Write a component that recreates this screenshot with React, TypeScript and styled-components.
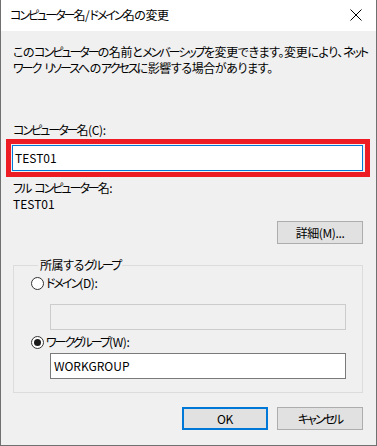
import styled, { createGlobalStyle } from "styled-components";

const GlobalStyle = createGlobalStyle`
  html, body {
    margin: 0;
    padding: 0;
    background: #f0f0f0;
  }
  * {
    box-sizing: border-box;
  }
`;

const FONT = `"Noto Sans CJK JP", "Noto Sans", sans-serif`;

// katakana runs are set tighter, as the Windows UI font draws them narrow
const Kana = styled.span`
  letter-spacing: -2px;
`;

const Space = styled.span`
  display: inline-block;
  width: 4px;
`;

const RUN = /([\u30A0-\u30FF]+| )/;

function JText({ children }: { children: string }) {
  return (
    <>
      {children.split(RUN).map((part, i) => {
        if (part === " ") return <Space key={i} />;
        if (/^[\u30A0-\u30FF]+$/.test(part)) return <Kana key={i}>{part}</Kana>;
        return part;
      })}
    </>
  );
}

const Window = styled.div`
  width: 377px;
  height: 446px;
  display: flex;
  flex-direction: column;
  overflow: hidden;
  background: #f0f0f0;
  border: 1px solid #707070;
  border-top: none;
  font-family: ${FONT};
  font-feature-settings: "palt" 1;
  font-size: 12px;
  line-height: 16px;
  letter-spacing: -0.4px;
  color: #000;
`;

const TitleBar = styled.div`
  height: 31px;
  flex-shrink: 0;
  display: flex;
  align-items: center;
  justify-content: space-between;
  background: #fff;
  padding: 0 9px 0 9px;
`;

const Title = styled.span`
  font-size: 12px;
  padding-bottom: 1px;
`;

const CloseIcon = styled.svg`
  width: 12px;
  height: 12px;
  margin-right: 5px;
  margin-bottom: 1px;
`;

const Body = styled.div`
  display: flex;
  flex-direction: column;
  padding: 13px 12px 0 11px;
`;

const Text = styled.p<{ $mt?: number }>`
  margin: ${(p) => p.$mt ?? 0}px 0 0 1px;
`;

const Description = styled(Text)`
  white-space: nowrap;
`;

const Latin = styled.span`
  letter-spacing: 0;
`;

const Highlight = styled.div`
  margin-top: 7px;
  outline: 5px solid #ed1c24;
  outline-offset: 1px;
`;

const TextInput = styled.div<{ $focused?: boolean; $disabled?: boolean }>`
  height: 26px;
  display: flex;
  align-items: center;
  padding: 0 3px 1px 3px;
  letter-spacing: 0;
  background: ${(p) => (p.$disabled ? "#f0f0f0" : "#fff")};
  border: 1px solid
    ${(p) => (p.$focused ? "#0078d7" : p.$disabled ? "#cccccc" : "#7a7a7a")};
`;

const MainInput = styled(TextInput)`
  width: 351px;
  padding-left: 2px;
`;

const ButtonRow = styled.div<{ $mt: number }>`
  display: flex;
  justify-content: flex-end;
  gap: 9px;
  margin-top: ${(p) => p.$mt}px;
  margin-right: 1px;
`;

const Button = styled.button<{ $default?: boolean }>`
  width: 86px;
  height: 23px;
  padding: 0 0 1px 0;
  font-family: ${FONT};
  font-feature-settings: "palt" 1;
  font-size: 12px;
  letter-spacing: -0.4px;
  color: #000;
  background: #e1e1e1;
  border: ${(p) => (p.$default ? "2px solid #0078d7" : "1px solid #adadad")};
`;

const GroupBox = styled.fieldset`
  margin: 13px 1px 0 1px;
  padding: 0 16px 13px 17px;
  border: 1px solid #dcdcdc;
  min-width: 0;
`;

const Legend = styled.legend`
  margin-left: 7px;
  padding: 0 2px;
  line-height: 16px;
`;

const RadioRow = styled.label<{ $mt: number }>`
  display: flex;
  align-items: center;
  gap: 2px;
  height: 16px;
  margin-top: ${(p) => p.$mt}px;
`;

const RadioCircle = styled.span<{ $checked?: boolean }>`
  width: 13px;
  height: 13px;
  flex-shrink: 0;
  border-radius: 50%;
  border: 1px solid #333;
  background: #fff;
  display: flex;
  align-items: center;
  justify-content: center;

  &::after {
    content: "";
    width: 7px;
    height: 7px;
    border-radius: 50%;
    background: ${(p) => (p.$checked ? "#1a1a1a" : "transparent")};
  }
`;

const GroupInput = styled(TextInput)<{ $mt: number }>`
  margin: ${(p) => p.$mt}px 0 0 19px;
`;

export default function App() {
  return (
    <>
      <GlobalStyle />
      <Window>
        <TitleBar>
          <Title>
            <JText>コンピューター名/ドメイン名の変更</JText>
          </Title>
          <CloseIcon viewBox="0 0 12 12">
            <path d="M0.5 0.5 L11.5 11.5 M11.5 0.5 L0.5 11.5" stroke="#000" strokeWidth="1" fill="none" />
          </CloseIcon>
        </TitleBar>
        <Body>
          <Description>
            <JText>このコンピューターの名前とメンバーシップを変更できます。変更により、ネット</JText>
            <br />
            <JText>ワーク リソースへのアクセスに影響する場合があります。</JText>
          </Description>
          <Text $mt={46}>
            <JText>コンピューター名(C):</JText>
          </Text>
          <Highlight>
            <MainInput $focused>TEST01</MainInput>
          </Highlight>
          <Text $mt={9}>
            <JText>フル コンピューター名:</JText>
          </Text>
          <Text>
            <Latin>TEST01</Latin>
          </Text>
          <ButtonRow $mt={9}>
            <Button>詳細(M)...</Button>
          </ButtonRow>
          <GroupBox>
            <Legend>
              <JText>所属するグループ</JText>
            </Legend>
            <RadioRow $mt={2}>
              <RadioCircle />
              <span>
                <JText>ドメイン(D):</JText>
              </span>
            </RadioRow>
            <GroupInput $disabled $mt={13} />
            <RadioRow $mt={4}>
              <RadioCircle $checked />
              <span>
                <JText>ワークグループ(W):</JText>
              </span>
            </RadioRow>
            <GroupInput $mt={3}>WORKGROUP</GroupInput>
          </GroupBox>
          <ButtonRow $mt={14}>
            <Button $default>OK</Button>
            <Button>
              <JText>キャンセル</JText>
            </Button>
          </ButtonRow>
        </Body>
      </Window>
    </>
  );
}
